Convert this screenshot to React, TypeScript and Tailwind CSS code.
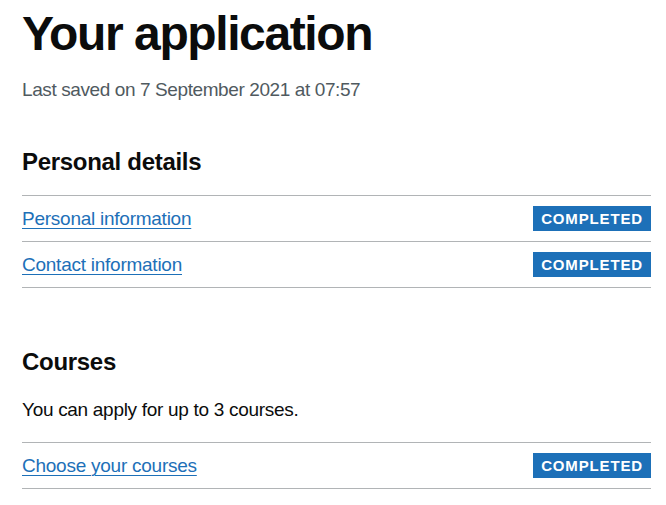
const font = { fontFamily: '"Liberation Sans", Arial, sans-serif' }

type Task = { label: string; status: string }

function TaskRow({ task }: { task: Task }) {
  return (
    <li className="flex items-center justify-between border-b border-[#b1b4b6] h-[46px]">
      <a href="#" className="text-[19px] leading-[25px] tracking-[-0.25px] text-[#1d70b8] underline underline-offset-[3px] decoration-1">
        {task.label}
      </a>
      <strong className="bg-[#1d70b8] text-white text-[15px] leading-[16px] font-bold uppercase tracking-[0.85px] px-2 pt-[5px] pb-[4px]">
        {task.status}
      </strong>
    </li>
  )
}

export default function App() {
  const personal: Task[] = [
    { label: "Personal information", status: "Completed" },
    { label: "Contact information", status: "Completed" },
  ]
  const courses: Task[] = [{ label: "Choose your courses", status: "Completed" }]

  return (
    <div className="bg-white min-h-screen text-[#0b0c0c] pl-[22px] pr-[15px]" style={font}>
      <h1 className="text-[48px] leading-[50px] font-bold tracking-[-1.4px] pt-[9px]">Your application</h1>
      <p className="text-[19px] leading-[25px] tracking-[-0.4px] text-[#505a5f] mt-[18px]">Last saved on 7 September 2021 at 07:57</p>

      <h2 className="text-[24px] leading-[30px] font-bold tracking-[-0.3px] mt-[45px]">Personal details</h2>
      <ul className="mt-[18px] border-t border-[#b1b4b6]">
        {personal.map((t) => (
          <TaskRow key={t.label} task={t} />
        ))}
      </ul>

      <h2 className="text-[24px] leading-[30px] font-bold tracking-[-0.3px] mt-[59px]">Courses</h2>
      <p className="text-[19px] leading-[25px] tracking-[-0.3px] mt-[20px]">You can apply for up to 3 courses.</p>
      <ul className="mt-[20px] border-t border-[#b1b4b6]">
        {courses.map((t) => (
          <TaskRow key={t.label} task={t} />
        ))}
      </ul>
    </div>
  )
}
